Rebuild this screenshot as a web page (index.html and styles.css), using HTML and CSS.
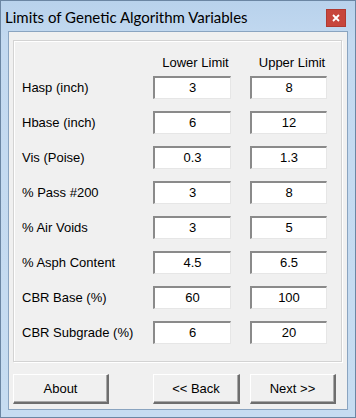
FILE: index.html
```html
<!DOCTYPE html>
<html>
<head>
<meta charset="utf-8">
<link rel="stylesheet" href="styles.css">
</head>
<body>
<div class="window">
  <div class="titlebar">
    <span class="title">Limits of Genetic Algorithm Variables</span>
    <span class="close"><svg width="8" height="8" viewBox="0 0 8 8"><path d="M1 1L7 7M7 1L1 7" stroke="#fff" stroke-width="1.8"/></svg></span>
  </div>
  <div class="client">
    <div class="group">
      <div class="row head">
        <span class="label"></span>
        <span class="hcell lower">Lower Limit</span>
        <span class="hcell upper">Upper Limit</span>
      </div>
      <div class="row"><span class="label">Hasp (inch)</span><span class="field lower">3</span><span class="field upper">8</span></div>
      <div class="row"><span class="label">Hbase (inch)</span><span class="field lower">6</span><span class="field upper">12</span></div>
      <div class="row"><span class="label">Vis (Poise)</span><span class="field lower">0.3</span><span class="field upper">1.3</span></div>
      <div class="row"><span class="label">% Pass #200</span><span class="field lower">3</span><span class="field upper">8</span></div>
      <div class="row"><span class="label">% Air Voids</span><span class="field lower">3</span><span class="field upper">5</span></div>
      <div class="row"><span class="label">% Asph Content</span><span class="field lower">4.5</span><span class="field upper">6.5</span></div>
      <div class="row"><span class="label">CBR Base (%)</span><span class="field lower">60</span><span class="field upper">100</span></div>
      <div class="row"><span class="label">CBR Subgrade (%)</span><span class="field lower">6</span><span class="field upper">20</span></div>
    </div>
    <div class="buttons">
      <span class="btn about">About</span>
      <span class="btn back">&lt;&lt; Back</span>
      <span class="btn next">Next &gt;&gt;</span>
    </div>
  </div>
</div>
</body>
</html>
```
FILE: styles.css
```css
html, body {
  margin: 0;
  padding: 0;
  background: #ffffff;
}
.window {
  width: 356px;
  height: 418px;
  box-sizing: border-box;
  border: 1px solid #6b86a3;
  background: linear-gradient(#b8d2ec, #c3d9f0 40px, #c6dcf1);
  display: flex;
  flex-direction: column;
  font-family: "Liberation Sans", Arial, sans-serif;
  font-size: 13px;
  color: #000;
}
.titlebar {
  height: 30px;
  display: flex;
  align-items: center;
  justify-content: space-between;
  padding: 0 9px 0 4px;
}
.title {
  font-family: Lato, "Noto Sans", sans-serif;
  font-size: 15px;
  color: #000;
  margin-top: 1px;
}
.close {
  width: 20px;
  height: 18px;
  background: #c7463c;
  border: 1px solid #b03a31;
  box-sizing: border-box;
  display: flex;
  align-items: center;
  justify-content: center;
  margin-top: 3px;
}
.client {
  margin: 0 7px 7px;
  border: 1px solid #8aa4c0;
  background: #f0f0f0;
  flex: 1;
  padding: 8px 5px 0 4px;
  display: flex;
  flex-direction: column;
}
.group {
  height: 322px;
  box-sizing: border-box;
  border: 1px solid #d3d3d3;
  box-shadow: inset 1px 1px 0 #ffffff, 1px 1px 0 #ffffff;
  padding: 13px 0 0 8px;
  display: flex;
  flex-direction: column;
  gap: 12px;
}
.row {
  display: flex;
  align-items: center;
  height: 23px;
}
.row.head {
  height: 16px;
  margin-bottom: -6px;
}
.label {
  width: 131px;
  flex: none;
}
.lower {
  width: 78px;
}
.upper {
  width: 77px;
  margin-left: 19px;
}
.hcell {
  text-align: center;
  padding-left: 7px;
  box-sizing: border-box;
}
.field {
  height: 23px;
  box-sizing: border-box;
  background: #fff;
  border-top: 2px solid #8a8a8a;
  border-left: 2px solid #8a8a8a;
  border-right: 1px solid #e6e6e6;
  border-bottom: 1px solid #e6e6e6;
  display: flex;
  align-items: center;
  justify-content: center;
  padding-bottom: 1px;
}
.buttons {
  display: flex;
  margin-top: 12px;
}
.btn {
  height: 30px;
  box-sizing: border-box;
  background: #f0f0f0;
  border-top: 1px solid #ffffff;
  border-left: 1px solid #ffffff;
  border-right: 2px solid #6e6e6e;
  border-bottom: 2px solid #6e6e6e;
  box-shadow: inset -1px -1px 0 #a8a8a8;
  display: flex;
  align-items: center;
  justify-content: center;
}
.about {
  width: 96px;
}
.back {
  width: 87px;
  margin-left: 44px;
}
.next {
  width: 86px;
  margin-left: 10px;
}
```
